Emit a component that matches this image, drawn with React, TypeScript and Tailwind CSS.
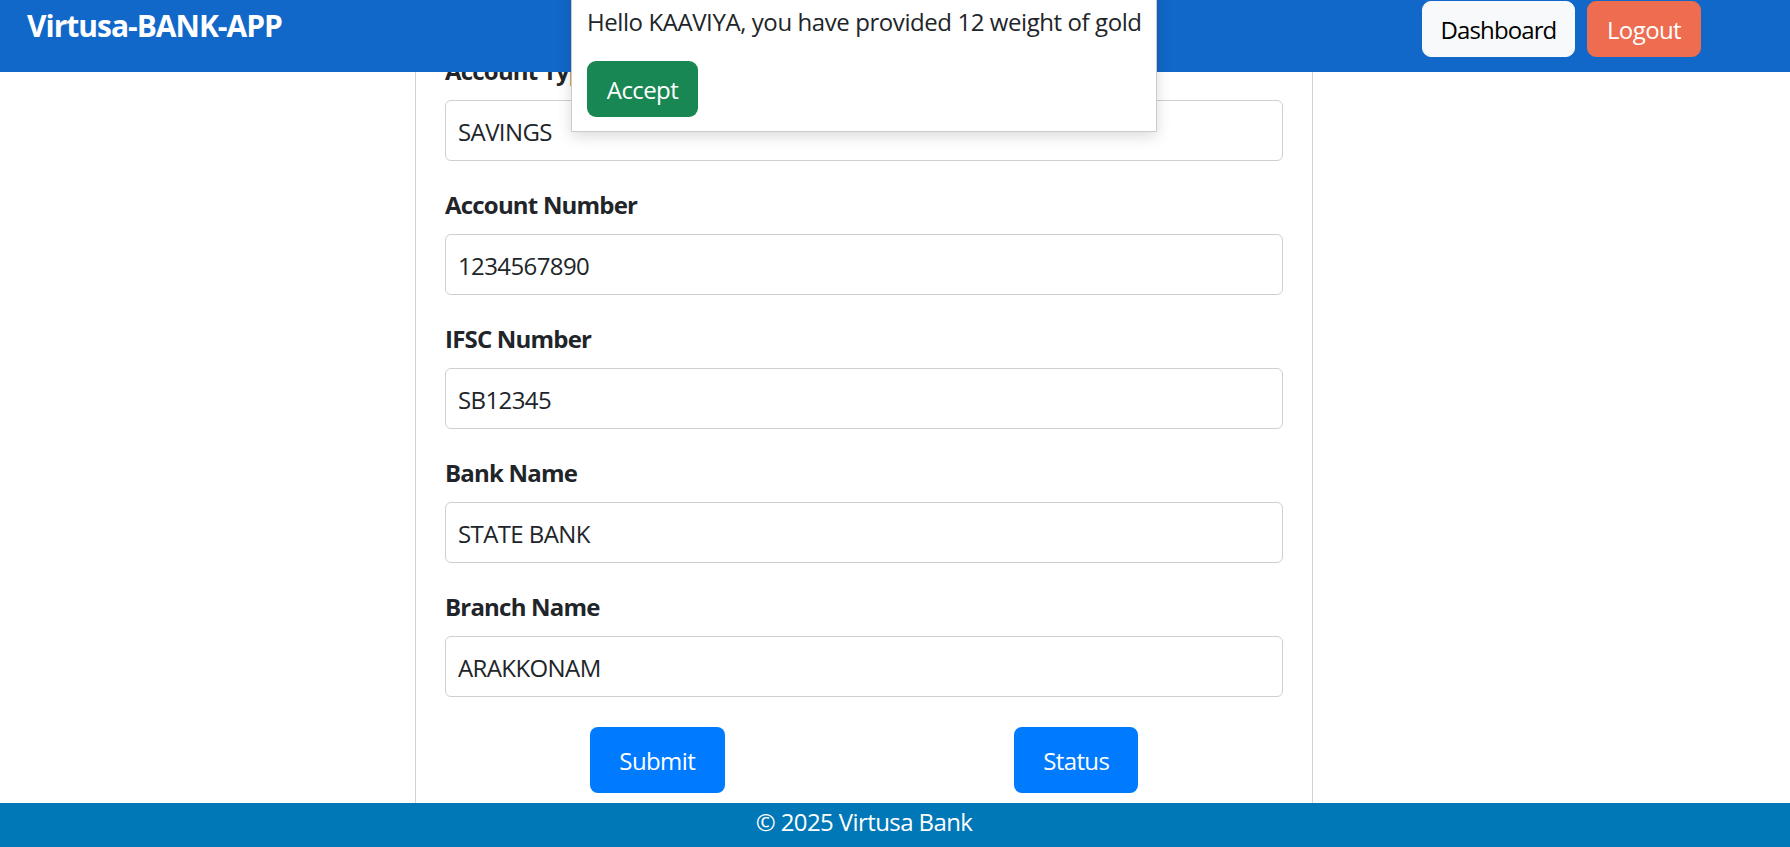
import React from "react";

const fields = [
  { label: "Account Type", value: "SAVINGS" },
  { label: "Account Number", value: "1234567890" },
  { label: "IFSC Number", value: "SB12345" },
  { label: "Bank Name", value: "STATE BANK" },
  { label: "Branch Name", value: "ARAKKONAM" },
];

export default function App() {
  return (
    <div className="relative flex h-[847px] w-full flex-col overflow-hidden bg-white font-['Open_Sans',sans-serif] tracking-[-0.6px] text-[#212529]">
      <nav className="relative z-10 h-[72px] shrink-0 bg-[#1168c9]">
        <div className="flex h-full w-[1728px] items-start justify-between px-[27px] pt-px">
          <span className="mt-[2px] text-[30px] font-bold leading-[45px] tracking-[-1px] text-white">Virtusa-BANK-APP</span>
          <div className="flex gap-[12px]">
            <button className="h-[56px] w-[153px] rounded-[9px] border border-[#f8f9fa] bg-[#f8f9fa] pt-[2px] text-[24px] leading-[36px] tracking-[-0.9px] text-black">
              Dashboard
            </button>
            <button className="h-[56px] w-[114px] rounded-[9px] border border-[#ee6c4f] bg-[#ee6c4f] pt-[2px] text-[24px] leading-[36px] text-white">
              Logout
            </button>
          </div>
        </div>
      </nav>

      <main className="flex-1 overflow-hidden">
        <div className="w-[1728px]">
          <div className="mx-auto -mt-[19px] w-[898px] border-x border-[#d2d2d2] px-[29px] pb-[40px]">
            {fields.map((f) => (
              <div key={f.label} className="mb-[26px] last:mb-0">
                <label className="mb-[11px] block text-[24px] font-bold leading-[36px] tracking-[-0.8px]">{f.label}</label>
                <input
                  readOnly
                  value={f.value}
                  className="block h-[61px] w-full rounded-[6px] border border-[#cfcfcf] bg-white px-[12px] pt-[2px] text-[24px] tracking-[-0.6px] text-[#212529] outline-none"
                />
              </div>
            ))}
            <div className="mt-[30px] flex justify-around">
              <button className="h-[66px] w-[135px] rounded-[8px] bg-[#007bff] pt-[2px] text-[24px] text-white">Submit</button>
              <button className="h-[66px] w-[124px] rounded-[8px] bg-[#007bff] pt-[2px] text-[24px] text-white">Status</button>
            </div>
          </div>
        </div>
      </main>

      <footer className="relative z-10 h-[44px] shrink-0 bg-[#0077b6]">
        <div className="w-[1728px] pt-[1px] text-center text-[24px] leading-[36px] text-white">© 2025 Virtusa Bank</div>
      </footer>

      <div className="absolute left-[571px] top-[-15px] z-20 w-[586px] border border-[#cccccc] bg-white px-[15px] pb-[14px] pt-[18px] shadow-[0_4px_14px_rgba(0,0,0,0.15)]">
        <p className="mb-[21px] whitespace-nowrap text-[24px] leading-[36px] tracking-[-0.42px] text-[#212529]">
          Hello KAAVIYA, you have provided 12 weight of gold
        </p>
        <button className="h-[56px] w-[111px] rounded-[9px] bg-[#198754] pt-[2px] text-[24px] leading-[36px] text-white">Accept</button>
      </div>
    </div>
  );
}
